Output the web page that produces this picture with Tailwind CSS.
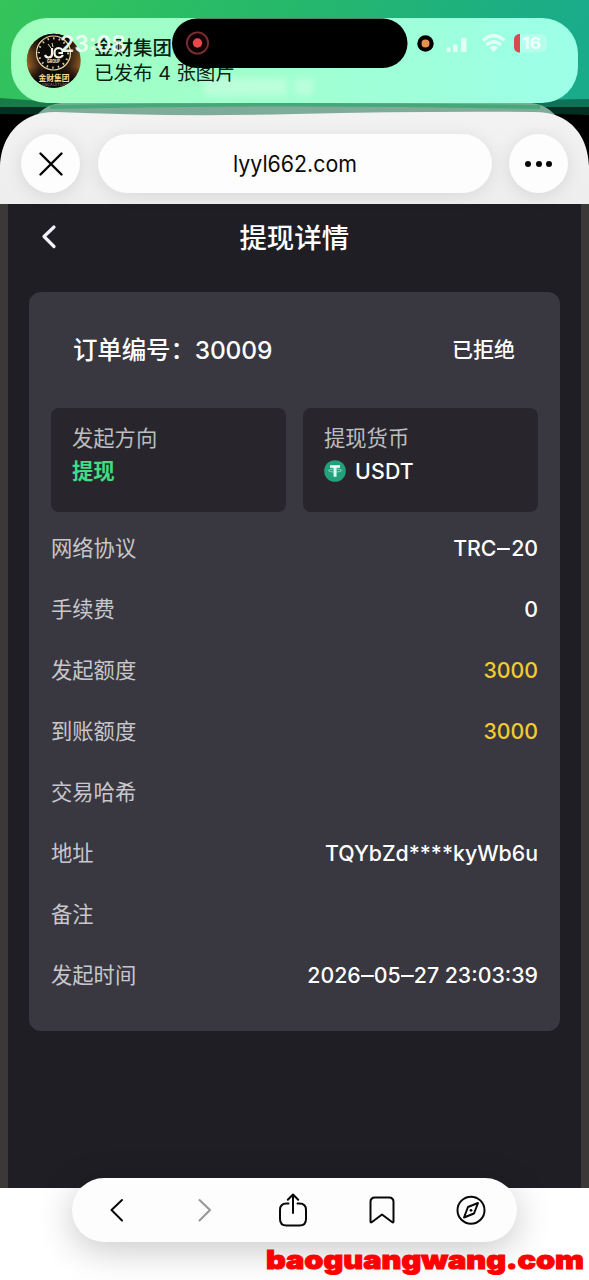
<!DOCTYPE html>
<html lang="zh-CN">
<head>
<meta charset="utf-8">
<meta name="viewport" content="width=device-width, initial-scale=1">
<title>提现详情</title>
<script src="https://cdn.jsdelivr.net/npm/@tailwindcss/browser@4"></script>
</head>
<body class="bg-white">
<div class="relative flex h-[1280px] w-[589px] flex-col overflow-hidden bg-white font-['Inter','Noto_Sans_CJK_SC',sans-serif]">

  <!-- Status area and browser bar -->
  <header class="relative flex h-[204px] flex-col justify-end bg-black">
    <svg class="absolute inset-0" width="589" height="204" viewBox="0 0 589 204">
      <defs>
        <linearGradient id="top" x1="0" y1="0" x2="1" y2="0.12"><stop offset="0" stop-color="#35c45a"/><stop offset=".5" stop-color="#25b86b"/><stop offset="1" stop-color="#1aab8b"/></linearGradient>
        <linearGradient id="sheet" x1="0" y1="0" x2="0" y2="1"><stop offset="0" stop-color="#f2f2f2"/><stop offset="1" stop-color="#eeeeef"/></linearGradient>
      </defs>
      <rect width="589" height="107" fill="url(#top)"/>
      <path d="M0 98Q100 107 295 104T589 99V115Q400 109 295 113T0 114Z" fill="#064c38" fill-opacity=".6"/>
      <path d="M33 120Q44 104 62 103H530Q548 104 559 120Z" fill="#7eac98"/>
      <path d="M50 105Q295 101 540 105V109Q295 104 50 109Z" fill="#46a878"/>
      <path d="M0 204V166C1 144 11 126 30 117Q40 112 56 112Q170 117 295 114T533 112Q550 112 560 117C579 126 588 144 589 166V204Z" fill="url(#sheet)"/>
    </svg>
    <div class="relative flex h-[82px] items-start justify-between pt-3 pl-[21px] pr-[21px]">
      <div class="flex size-[59px] items-center justify-center rounded-full bg-[#fdfdfd] shadow-[0_3px_18px_rgba(0,0,0,0.10)]">
        <svg width="24" height="24" viewBox="0 0 24 24" fill="none" stroke="#050505" stroke-width="2.4" stroke-linecap="round"><path d="M1.500 1.500 22.500 22.500M22.500 1.500 1.500 22.500"/></svg>
      </div>
      <div class="flex h-[59px] w-[394px] items-center justify-center rounded-full bg-[#fdfdfd] shadow-[0_3px_18px_rgba(0,0,0,0.09)]">
        <svg width="126" height="34" viewBox="0 0 126 34"><text x="1" y="24.500" font-size="22.500" textLength="124" lengthAdjust="spacingAndGlyphs" fill="#0a0a0a">lyyl662.com</text></svg>
      </div>
      <div class="flex size-[59px] items-center justify-center gap-[4.3px] rounded-full bg-[#fdfdfd] shadow-[0_3px_18px_rgba(0,0,0,0.10)]">
        <span class="size-[6px] rounded-full bg-[#080808]"></span><span class="size-[6px] rounded-full bg-[#080808]"></span><span class="size-[6px] rounded-full bg-[#080808]"></span>
      </div>
    </div>

    <!-- Notification banner lying over the status bar -->
    <div class="absolute top-[18px] left-[11px] h-[85px] w-[567px] overflow-hidden rounded-[36px] bg-linear-to-r from-[#a0ffbe] via-[#a0ffd0] to-[#9cffe8]">
      <svg width="567" height="85" viewBox="11 18 567 85">
        <defs>
          <linearGradient id="gold"><stop offset="0" stop-color="#b87832"/><stop offset=".24" stop-color="#3a2211"/><stop offset=".5" stop-color="#080706"/><stop offset=".76" stop-color="#3a2211"/><stop offset="1" stop-color="#a96d2e"/></linearGradient>
          <linearGradient id="shade" x1="0" y1="0" x2="0" y2="1"><stop offset="0" stop-color="#070605"/><stop offset=".35" stop-color="#070605" stop-opacity=".3"/><stop offset=".6" stop-color="#070605" stop-opacity=".1"/><stop offset=".85" stop-color="#070605"/></linearGradient>
          <filter id="soft" x="-20%" y="-50%" width="140%" height="200%"><feGaussianBlur stdDeviation="3"/></filter>
          <clipPath id="ava"><circle cx="53.700" cy="60.700" r="27"/></clipPath>
        </defs>
        <g fill="#d2ffe6" opacity=".55" filter="url(#soft)"><rect x="204" y="78" width="83" height="18"/><rect x="295" y="79" width="18" height="16"/></g>
        <g clip-path="url(#ava)">
          <rect x="26" y="33" width="56" height="56" fill="url(#gold)"/><rect x="26" y="33" width="56" height="56" fill="url(#shade)"/>
          <circle cx="53.500" cy="53" r="17" fill="#0b0a08" stroke="#e6d8a6" stroke-width="1.200"/>
          <circle cx="53.500" cy="53" r="14.700" fill="none" stroke="#d8c89a" stroke-width="2.200" stroke-dasharray="1.500 4.200"/>
          <path d="M52 48V54Q52 57.500 48.500 57.500Q46 57.500 45 55M63 50.500Q61 48 58.500 48Q54.500 48.300 54.500 52.700T58.500 57.500Q61.500 57.500 63 55M58.500 53H63" stroke="#f7f3e6" stroke-width="2.200" fill="none"/>
          <path d="M48 44l3 4M52 43l1 4" stroke="#e9dfbd" stroke-width="1"/>
          <text x="47" y="62.500" font-size="4.200" font-weight="800" textLength="13" lengthAdjust="spacingAndGlyphs" fill="#eee6ca">GROUP</text>
          <text x="38.500" y="80.800" font-size="8.200" font-weight="700" textLength="31" lengthAdjust="spacingAndGlyphs" fill="#f4dc95">金财集团</text>
          <text x="41" y="86" font-size="3.500" textLength="27" fill="#b9a16d">JINCAIJITUAN</text>
        </g>
        <g font-family="'Inter','Noto Sans CJK SC',sans-serif">
          <text x="94" y="55.300" font-size="19.500" font-weight="500" fill="#0b1e13">金财集团</text>
          <text x="94" y="79.800" font-size="19.300" textLength="141" lengthAdjust="spacingAndGlyphs" fill="#0b1e13">已发布 4 张图片</text>
          <text x="60" y="52" font-size="22.500" font-weight="600" textLength="66" lengthAdjust="spacingAndGlyphs" fill="#f2fff7" fill-opacity=".94">23:08</text>
        </g>
        <rect x="172" y="18.500" width="235.500" height="49.500" rx="24.700" fill="#000"/>
        <circle cx="197.500" cy="43" r="10.600" fill="#120304" stroke="#792e34" stroke-width="1.800"/><circle cx="197.500" cy="43" r="4.700" fill="#e9494d"/>
        <circle cx="425.500" cy="43.500" r="8.200" fill="#000"/><circle cx="425.500" cy="43.500" r="4" fill="#e8914c"/>
        <g fill="#e2fff6">
          <rect x="446.500" y="47.500" width="4" height="4.500" rx="1"/><rect x="453" y="44.500" width="4.500" height="7.500" rx="1"/><rect x="461" y="38" width="5.500" height="14" rx="1"/>
        </g>
        <g fill="none" stroke="#e2fff6" stroke-width="3.300"><path d="M483 40.500Q493.700 31 504.500 40.500"/><path d="M486.500 45Q493.700 38.500 501 45"/></g>
        <path d="M489.300 47.500Q493.700 43.800 498.200 47.500L493.700 52Z" fill="#e2fff6"/>
        <rect x="514" y="34" width="33" height="18.500" rx="6" fill="#b2ffec"/>
        <path d="M520 34V52.500C516 52.500 514 50 514 47V39.500C514 36.500 516 34 520 34Z" fill="#d84b4c"/>
        <path d="M548.500 40.500q2.500 2.700 0 5.500Z" fill="#b2ffec"/>
        <text x="522" y="49" font-size="16" font-weight="700" textLength="19" lengthAdjust="spacingAndGlyphs" fill="#f3fffb">16</text>
      </svg>
    </div>
  </header>

  <!-- Page content -->
  <main class="flex h-[984px] flex-col border-x-8 border-[#3b3837] bg-[#1f1e24] pr-[21.5px] pl-[21px]">
    <div class="grid h-[88px] grid-cols-[1fr_auto_1fr] pt-[14px]">
      <svg class="mt-[6px] ml-[12px]" width="16" height="26" viewBox="0 0 16 26" fill="none" stroke="#f3f2fa" stroke-width="3.200" stroke-linecap="round" stroke-linejoin="round"><path d="M13 3 3 12.500 13 22.500"/></svg>
      <h1 class="h-10 text-[27.400px] leading-10 font-medium text-white">提现详情</h1>
      <span></span>
    </div>

    <section class="flex h-[739px] flex-col rounded-xl bg-[#393740] px-[22px] pr-[21.5px]">
      <div class="flex h-[116px] items-center justify-between pr-[23px] pl-[22px] font-medium text-white">
        <span class="text-[24.500px] tracking-[-0.15px]">订单编号：30009</span>
        <span class="text-[21px]">已拒绝</span>
      </div>
      <div class="grid h-[104px] grid-cols-2 gap-[17px]">
        <div class="flex flex-col rounded-lg bg-[#28262c] px-[21px] pt-[14px]">
          <span class="text-[21.300px] leading-8 text-[#bdbcc0]">发起方向</span>
          <span class="pt-px text-[21.300px] leading-8 font-bold text-[#41dc84]">提现</span>
        </div>
        <div class="flex flex-col rounded-lg bg-[#28262c] px-[21px] pt-[14px]">
          <span class="text-[21.300px] leading-8 text-[#bdbcc0]">提现货币</span>
          <span class="flex items-center gap-[9px] pt-px text-[21.300px] leading-8 font-medium text-white">
            <svg width="22" height="22" viewBox="0 0 22 22"><circle cx="11" cy="11" r="10.800" fill="#24a17b"/><path d="M6 5.200H16V7.800H12.500V16.800H9.600V7.800H6Z" fill="#e9fff8"/><ellipse cx="11" cy="10.500" rx="6.500" ry="1.500" fill="none" stroke="#b8eedc" stroke-width=".7"/></svg><span class="tracking-[0.2px]">USDT</span>
          </span>
        </div>
      </div>
      <dl class="mt-[6px] flex flex-col text-[21.300px] text-[#c8c7cb]">
        <div class="flex h-[61px] items-center justify-between"><dt>网络协议</dt><dd class="font-medium text-white">TRC<span class="mx-px inline-block scale-x-120 px-px">–</span>20</dd></div>
        <div class="flex h-[61px] items-center justify-between"><dt>手续费</dt><dd class="font-medium text-white">0</dd></div>
        <div class="flex h-[61px] items-center justify-between"><dt>发起额度</dt><dd class="font-medium text-[#f2cb30]">3000</dd></div>
        <div class="flex h-[61px] items-center justify-between"><dt>到账额度</dt><dd class="font-medium text-[#f2cb30]">3000</dd></div>
        <div class="flex h-[61px] items-center justify-between"><dt>交易哈希</dt><dd></dd></div>
        <div class="flex h-[61px] items-center justify-between"><dt>地址</dt><dd class="font-medium text-white">TQYbZd****kyWb6u</dd></div>
        <div class="flex h-[61px] items-center justify-between"><dt>备注</dt><dd></dd></div>
        <div class="flex h-[61px] items-center justify-between"><dt>发起时间</dt><dd class="font-medium text-white">2026<span class="inline-block scale-x-120 px-[1.200px]">–</span>05<span class="inline-block scale-x-120 px-[1.200px]">–</span>27 23:03:39</dd></div>
      </dl>
    </section>
  </main>

  <!-- Floating browser toolbar -->
  <nav class="absolute top-[1178px] left-[72px] flex h-[64px] w-[445px] items-center justify-around rounded-full bg-[#fdfdfd] pr-[2px] shadow-[0_8px_36px_rgba(0,0,0,0.22)]">
    <svg width="30" height="36" viewBox="0 0 30 36" fill="none" stroke="#080808" stroke-width="2" stroke-linecap="round" stroke-linejoin="round"><path d="M21 8 10.500 18 21 28.500"/></svg>
    <svg width="30" height="36" viewBox="0 0 30 36" fill="none" stroke="#969696" stroke-width="2" stroke-linecap="round" stroke-linejoin="round"><path d="M9.500 8 20 18 9.500 28.500"/></svg>
    <svg width="30" height="36" viewBox="0 0 30 36" fill="none" stroke="#080808" stroke-width="2" stroke-linecap="round" stroke-linejoin="round"><path d="M10.500 11.500H8.500Q2 11.500 2 18V27Q2 33.500 8.500 33.500H21.500Q28 33.500 28 27V18Q28 11.500 21.500 11.500H19.500M15 21V2.500M9.800 7.700 15 2.500l5.200 5.200"/></svg>
    <svg width="30" height="36" viewBox="0 0 30 36" fill="none" stroke="#080808" stroke-width="2" stroke-linecap="round" stroke-linejoin="round"><path d="M3.500 10Q3.500 5.500 8 5.500H22Q26.500 5.500 26.500 10V29.500Q26.500 31 25 30L15 22.500 5 30Q3.500 31 3.500 29.500Z"/></svg>
    <svg width="30" height="36" viewBox="0 0 30 36" fill="none" stroke="#080808" stroke-width="2" stroke-linejoin="round"><circle cx="15" cy="18.200" r="13.500"/><path d="M22 11 18 21.500 8 25.500 12 15Z"/><circle cx="15" cy="18.300" r="1.400" fill="#080808" stroke="none"/></svg>
  </nav>
  <svg class="absolute top-[1240px] left-[260px]" width="329" height="40" viewBox="0 0 329 40"><text x="6" y="29" font-family="Inter,sans-serif" font-size="26" font-weight="900" textLength="318" lengthAdjust="spacingAndGlyphs" fill="#fe0000" stroke="#fe0000" stroke-width="1">baoguangwang.com</text></svg>
</div>
</body>
</html>
